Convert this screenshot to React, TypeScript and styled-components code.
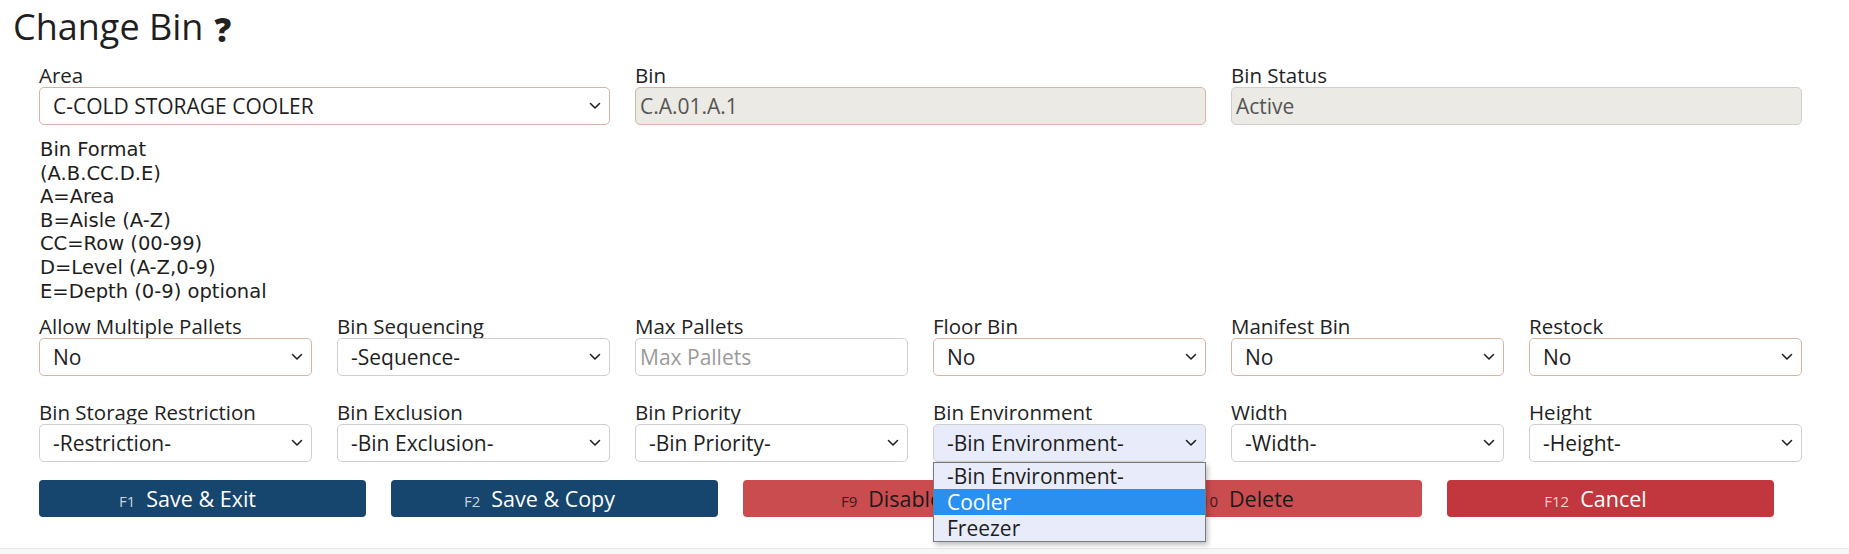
import React from 'react';
import styled, { createGlobalStyle, css } from 'styled-components';

const GlobalStyle = createGlobalStyle`
  html, body {
    margin: 0;
    padding: 0;
    background: #fff;
  }
  body {
    font-family: "Open Sans", "Noto Sans", Arial, sans-serif;
    color: #222;
  }
  * {
    box-sizing: border-box;
  }
`;

const Page = styled.div`
  width: 1849px;
  height: 554px;
  display: flex;
  flex-direction: column;
  overflow: hidden;
`;

const Title = styled.h1`
  margin: 3px 0 0 13px;
  font-size: 36px;
  font-weight: 400;
  line-height: 48px;
  color: #1f1f1f;
  display: flex;
  align-items: center;
  gap: 11px;
`;

const HelpMark = styled.span`
  font-size: 33px;
  font-weight: 800;
  color: #222;
  line-height: 1;
  margin-top: 4px;
`;

const Form = styled.div`
  padding: 0 0 0 39px;
  width: 1802px;
  display: flex;
  flex-direction: column;
  flex: 1;
`;

const Row = styled.div<{ $cols: number; $top?: number }>`
  display: grid;
  grid-template-columns: repeat(${p => p.$cols}, 1fr);
  column-gap: 25px;
  margin-top: ${p => p.$top ?? 0}px;
`;

const Field = styled.div`
  display: flex;
  flex-direction: column;
  position: relative;
`;

const Label = styled.label`
  font-size: 20.5px;
  line-height: 24px;
  color: #222;
`;

const controlBase = css<{ $warn?: boolean }>`
  height: 38px;
  border-radius: 5px;
  border: 1px solid ${p => (p.$warn ? '#d6b4a8' : '#cfcfcf')};
  font-family: "Open Sans", "Noto Sans", Arial, sans-serif;
  font-size: 21px;
  display: flex;
  align-items: center;
`;

const SelectBox = styled.div<{ $warn?: boolean; $focus?: boolean }>`
  ${controlBase};
  justify-content: space-between;
  color: #1e1e1e;
  background: ${p => (p.$focus ? '#e7ebfa' : '#fff')};
  padding: 0 8px 0 13px;
`;

const InputBox = styled.div<{ $warn?: boolean; $disabled?: boolean; $placeholder?: boolean }>`
  ${controlBase};
  background: ${p => (p.$disabled ? '#ebeae4' : '#fff')};
  color: ${p => (p.$placeholder ? '#9a9a9a' : p.$disabled ? '#555' : '#222')};
  padding: 0 4px;
`;

const Chevron = () => (
  <svg width="12" height="8" viewBox="0 0 12 8" fill="none">
    <path d="M1.5 1.5 L6 6 L10.5 1.5" stroke="#222" strokeWidth="1.6" strokeLinecap="round" strokeLinejoin="round" />
  </svg>
);

const FormatNote = styled.div`
  margin-top: 13px;
  font-family: "DejaVu Sans", Verdana, sans-serif;
  font-size: 19.5px;
  line-height: 23.6px;
  color: #1e1e1e;
  padding-left: 1px;
`;

const Buttons = styled.div`
  display: grid;
  grid-template-columns: repeat(5, 327px);
  column-gap: 25px;
  margin-top: 18px;
`;

const variants = {
  navy: { bg: '#16456e', fg: '#fff', key: '#c9d3de' },
  muted: { bg: '#cb4c4f', fg: '#1a1a1a', key: '#3a1a1a' },
  red: { bg: '#c1373d', fg: '#fff', key: '#efd0d0' },
};

const ActionButton = styled.button<{ $variant: keyof typeof variants }>`
  height: 37px;
  border: none;
  border-radius: 4px;
  background: ${p => variants[p.$variant].bg};
  color: ${p => variants[p.$variant].fg};
  font-family: "Open Sans", "Noto Sans", Arial, sans-serif;
  font-size: 21.5px;
  font-weight: 500;
  display: flex;
  align-items: center;
  justify-content: center;
  gap: 11px;
  padding: 0 30px 0 0;
  cursor: pointer;
`;

const KeyHint = styled.span<{ $variant: keyof typeof variants }>`
  font-size: 15px;
  color: ${p => variants[p.$variant].key};
  margin-top: 4px;
`;

const Dropdown = styled.ul`
  position: absolute;
  top: 100%;
  left: 0;
  right: 0;
  margin: 0;
  padding: 0;
  list-style: none;
  background: #e7ebfa;
  border: 1px solid #7a7a7a;
  box-shadow: 2px 3px 5px rgba(0, 0, 0, 0.25);
  z-index: 5;
  font-size: 21px;
`;

const Option = styled.li<{ $active?: boolean }>`
  height: 26px;
  line-height: 26px;
  padding-left: 13px;
  background: ${p => (p.$active ? '#2b8ff0' : 'transparent')};
  color: ${p => (p.$active ? '#fff' : '#1e1e1e')};
`;

const Footer = styled.div`
  margin-top: auto;
  height: 6px;
  border-top: 1px solid #e9e9e9;
  background: #f7f7f7;
`;

type Sel = { label: string; value: string; warn?: boolean; focus?: boolean };

const rowTwo: (Sel & { input?: boolean })[] = [
  { label: 'Allow Multiple Pallets', value: 'No', warn: true },
  { label: 'Bin Sequencing', value: '-Sequence-' },
  { label: 'Max Pallets', value: 'Max Pallets', input: true },
  { label: 'Floor Bin', value: 'No', warn: true },
  { label: 'Manifest Bin', value: 'No', warn: true },
  { label: 'Restock', value: 'No', warn: true },
];

const rowThree: Sel[] = [
  { label: 'Bin Storage Restriction', value: '-Restriction-' },
  { label: 'Bin Exclusion', value: '-Bin Exclusion-' },
  { label: 'Bin Priority', value: '-Bin Priority-' },
  { label: 'Bin Environment', value: '-Bin Environment-', focus: true },
  { label: 'Width', value: '-Width-' },
  { label: 'Height', value: '-Height-' },
];

const actions: { key: string; text: string; variant: keyof typeof variants }[] = [
  { key: 'F1', text: 'Save & Exit', variant: 'navy' },
  { key: 'F2', text: 'Save & Copy', variant: 'navy' },
  { key: 'F9', text: 'Disable', variant: 'muted' },
  { key: 'F10', text: 'Delete', variant: 'muted' },
  { key: 'F12', text: 'Cancel', variant: 'red' },
];

const SelectField = ({ label, value, warn, focus, children }: Sel & { children?: React.ReactNode }) => (
  <Field>
    <Label>{label}</Label>
    <SelectBox $warn={warn} $focus={focus}>
      <span>{value}</span>
      <Chevron />
    </SelectBox>
    {children}
  </Field>
);

export default function App() {
  return (
    <>
      <GlobalStyle />
      <Page>
        <Title>
          Change Bin <HelpMark>?</HelpMark>
        </Title>
        <Form>
          <Row $cols={3} $top={12}>
            <SelectField label="Area" value="C-COLD STORAGE COOLER" warn />
            <Field>
              <Label>Bin</Label>
              <InputBox $warn $disabled>C.A.01.A.1</InputBox>
            </Field>
            <Field>
              <Label>Bin Status</Label>
              <InputBox $disabled>Active</InputBox>
            </Field>
          </Row>

          <FormatNote>
            Bin Format<br />
            (A.B.CC.D.E)<br />
            A=Area<br />
            B=Aisle (A-Z)<br />
            CC=Row (00-99)<br />
            D=Level (A-Z,0-9)<br />
            E=Depth (0-9) optional
          </FormatNote>

          <Row $cols={6} $top={11}>
            {rowTwo.map(f =>
              f.input ? (
                <Field key={f.label}>
                  <Label>{f.label}</Label>
                  <InputBox $placeholder>{f.value}</InputBox>
                </Field>
              ) : (
                <SelectField key={f.label} {...f} />
              )
            )}
          </Row>

          <Row $cols={6} $top={24}>
            {rowThree.map(f => (
              <SelectField key={f.label} {...f}>
                {f.focus && (
                  <Dropdown>
                    <Option>-Bin Environment-</Option>
                    <Option $active>Cooler</Option>
                    <Option>Freezer</Option>
                  </Dropdown>
                )}
              </SelectField>
            ))}
          </Row>

          <Buttons>
            {actions.map(a => (
              <ActionButton key={a.key} $variant={a.variant}>
                <KeyHint $variant={a.variant}>{a.key}</KeyHint>
                {a.text}
              </ActionButton>
            ))}
          </Buttons>
        </Form>
        <Footer />
      </Page>
    </>
  );
}
